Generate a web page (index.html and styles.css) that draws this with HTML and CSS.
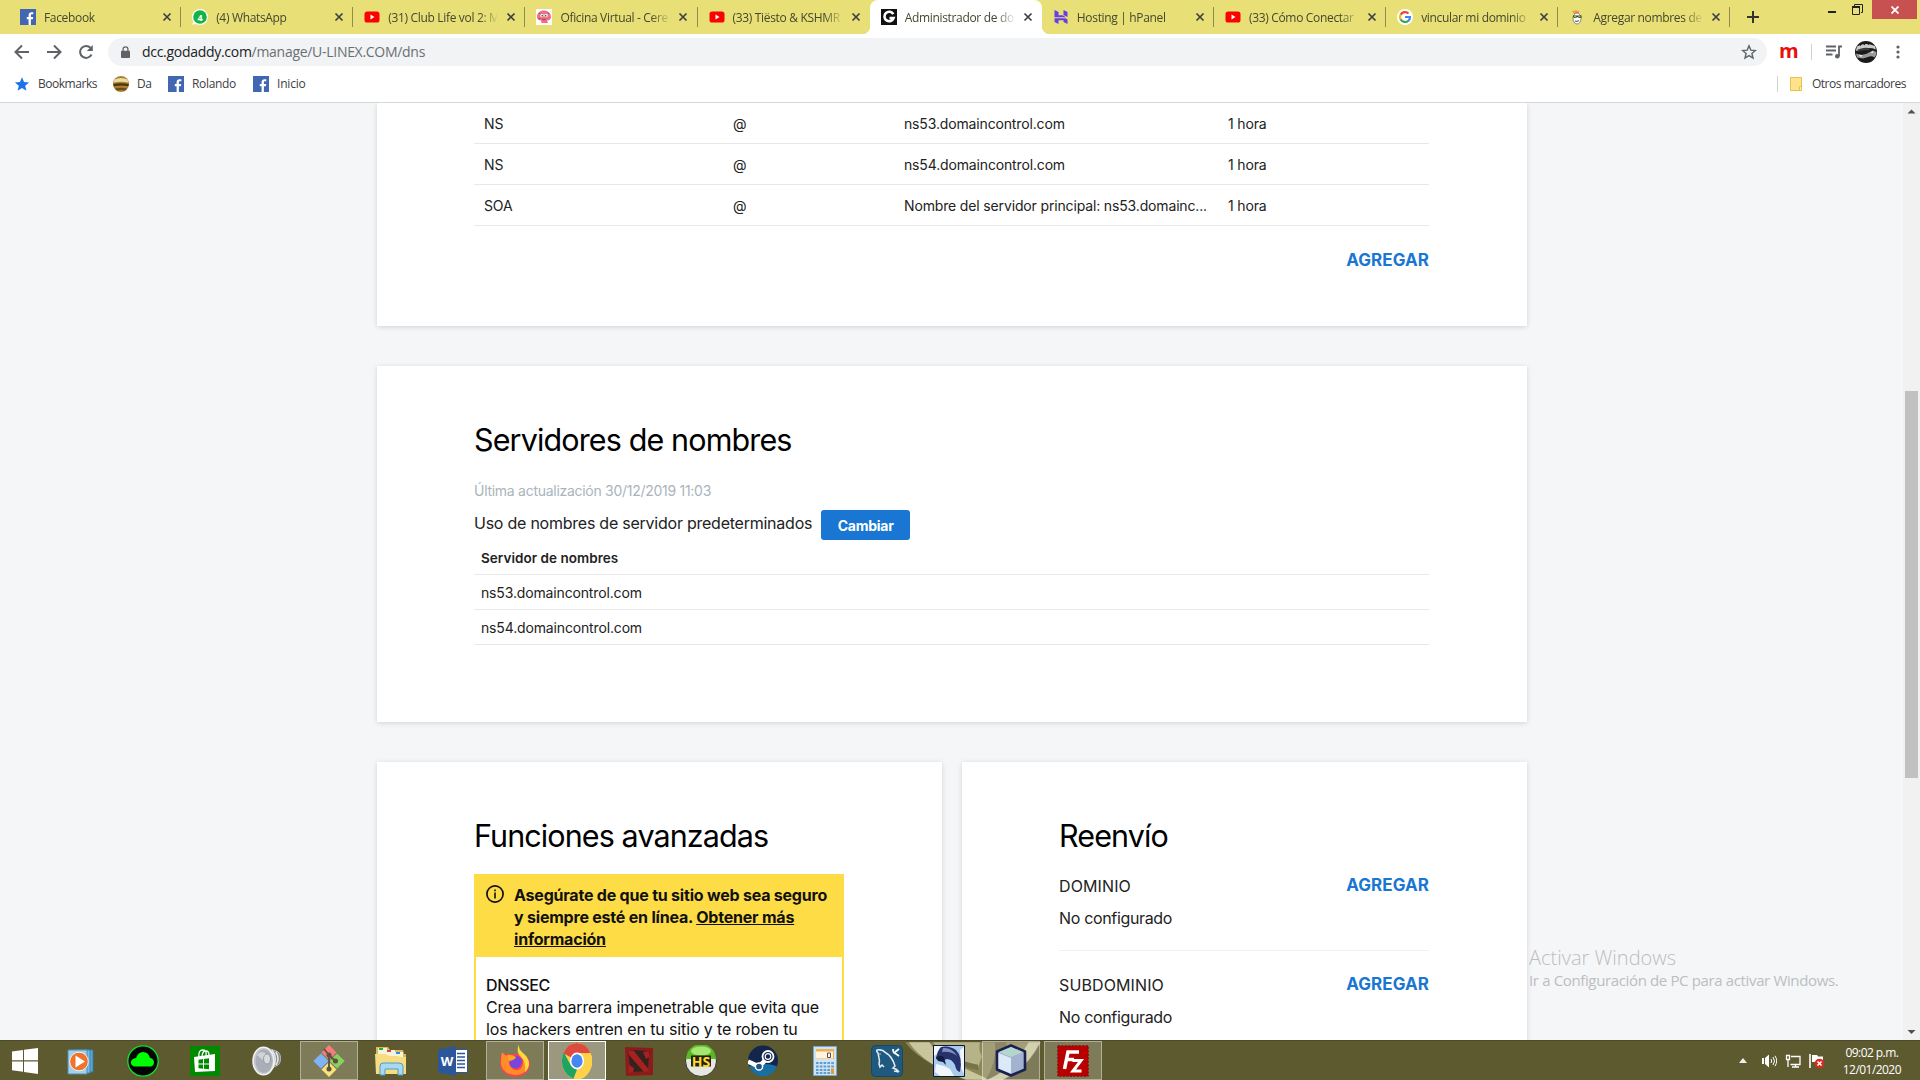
FILE: index.html
```html
<!DOCTYPE html>
<html lang="es">
<head>
<meta charset="utf-8">
<title>Administrador de dominios</title>
<link rel="stylesheet" href="styles.css">
</head>
<body>
<svg class="defs" width="0" height="0" aria-hidden="true">
  <symbol id="fb" viewBox="0 0 16 16"><path fill="#4267b2" d="M0 0h16v16H0z"/><path fill="#fff" d="M8.600 16v-5.800H6.800V8h1.800V6.300C8.600 4.300 9.700 3.200 11.600 3.200c.8 0 1.500.1 1.700.1v2h-1.200c-1 0-1.200.5-1.200 1.100V8h2.300l-.3 2.200h-2V16z"/></symbol>
  <symbol id="yt" viewBox="0 0 16 16"><rect x=".5" y="2.500" width="15" height="11" rx="2.600" fill="#f00"/><path fill="#fff" d="M6.500 5.600v4.800L10.500 8z"/></symbol>
  <symbol id="x" viewBox="0 0 10 10"><path d="M1.500 1.500l7 7M8.500 1.500l-7 7" stroke="#3c4043" stroke-width="1.700" fill="none"/></symbol>
</svg>

<header class="tabs">
  <div class="tab"><svg class="fav"><use href="#fb"/></svg><span class="tt">Facebook</span><svg class="close"><use href="#x"/></svg></div>
  <div class="tab"><svg class="fav" viewBox="0 0 16 16"><circle cx="8" cy="8" r="8" fill="#fff"/><path d="M.3 15.700l1-4 3 3z" fill="#fff"/><circle cx="8" cy="8" r="6.800" fill="#12b446"/><text x="8" y="11.500" class="wa">4</text></svg><span class="tt">(4) WhatsApp</span><svg class="close"><use href="#x"/></svg></div>
  <div class="tab"><svg class="fav"><use href="#yt"/></svg><span class="tt">(31) Club Life vol 2: M</span><svg class="close"><use href="#x"/></svg></div>
  <div class="tab"><svg class="fav" viewBox="0 0 16 16"><path fill="#fff" d="M0 0h16v16H0z"/><path fill="#ee6f80" d="M1 8c0-4 3-6.500 7-6.500s7 3 7 6.500c0 2.500-2 3.500-4 3.500L12 14H5.500L5 11.500C2.500 11.500 1 10.500 1 8z"/><circle cx="6" cy="6.500" r="1.800" fill="#fff"/><circle cx="10" cy="6.500" r="1.800" fill="#fff"/><circle cx="6.300" cy="6.700" r=".9" fill="#367"/><circle cx="9.700" cy="6.700" r=".9" fill="#367"/><path d="M6 10q2 1.500 4 0M3 4l1.500 1M12 3.500l1 1.500M3 9.500h1.500" stroke="#9c3045" fill="none" stroke-width=".8"/></svg><span class="tt">Oficina Virtual - Cere</span><svg class="close"><use href="#x"/></svg></div>
  <div class="tab last"><svg class="fav"><use href="#yt"/></svg><span class="tt">(33) Tiësto &amp; KSHMR</span><svg class="close"><use href="#x"/></svg></div>
  <div class="tab active"><svg class="fav" viewBox="0 0 16 16"><path fill="#111" d="M0 0h16v16H0z"/><path d="M12.300 5.200A4.700 4.700 0 1 0 12.600 9H8.500" fill="none" stroke="#fff" stroke-width="2.600"/></svg><span class="tt">Administrador de do</span><svg class="close"><use href="#x"/></svg></div>
  <div class="tab"><svg class="fav" viewBox="0 0 16 16"><path fill="#673de6" d="M1.500 1l4 2v3.200h4.200l3.300 2H1.500zM10.500 1l4 2v5l-4-2zM1.500 9.300h11l2 1.200V15l-4-2v-1.800h-5V15l-4-2z"/></svg><span class="tt">Hosting | hPanel</span><svg class="close"><use href="#x"/></svg></div>
  <div class="tab"><svg class="fav"><use href="#yt"/></svg><span class="tt">(33) Cómo Conectar</span><svg class="close"><use href="#x"/></svg></div>
  <div class="tab"><svg class="fav" viewBox="0 0 16 16"><circle cx="8" cy="8" r="8" fill="#fff"/><g fill="none" stroke-width="2.200"><path stroke="#ea4335" d="M3.600 5.800A5 5 0 0 1 11.500 4.500"/><path stroke="#fbbc05" d="M3.600 5.600a5 5 0 0 0 0 4.800"/><path stroke="#34a853" d="M3.600 10.200A5 5 0 0 0 11.400 11.700"/><path stroke="#4285f4" d="M8 8h5a5 5 0 0 1-1.700 3.800"/></g></svg><span class="tt">vincular mi dominio</span><svg class="close"><use href="#x"/></svg></div>
  <div class="tab"><svg class="fav" viewBox="0 0 16 16"><path fill="#f29a4a" d="M3 1.500l3 .5 1-1.500 1.500 2L10 1v3.500L5 5z"/><ellipse cx="8" cy="9.500" rx="4" ry="5.500" fill="#fff" stroke="#555" stroke-width=".7"/><path fill="#3b3b2a" d="M4 6.500h8.500v2.300H9.500L8.300 8 7 8.800H4.500z"/><path fill="#7ec242" d="M5 7h2.200v1H5zM9.300 7h2.200v1H9.300z"/><path d="M6 12q2 1 4-.4" stroke="#444" fill="none"/></svg><span class="tt">Agregar nombres de</span><svg class="close"><use href="#x"/></svg></div>
  <svg class="plus" viewBox="0 0 14 14"><path d="M7 1v12M1 7h12" stroke="#33352c" stroke-width="2"/></svg>
  <div class="winbtns">
    <svg class="wmin" viewBox="0 0 8 2"><path d="M0 0h8v2H0z" fill="#222"/></svg>
    <svg class="wmax" viewBox="0 0 11 11"><path d="M2.500 2V.5h8v8H9" fill="none" stroke="#222"/><path d="M.5 3h7v7.500h-7z" fill="none" stroke="#222"/><path d="M0 2h8v2H0z" fill="#222"/></svg>
    <div class="wclose"><svg viewBox="0 0 8 8"><path d="M.5.5l7 7M7.500.5l-7 7" stroke="#fff" stroke-width="1.800"/></svg></div>
  </div>
</header>

<div class="toolbar">
  <svg class="tb back" viewBox="0 0 16 16"><path d="M15 8H2M8 1.500L1.500 8 8 14.500" fill="none" stroke="#5f6368" stroke-width="2"/></svg>
  <svg class="tb fwd" viewBox="0 0 16 16"><path d="M1 8h13M8 1.500L14.500 8 8 14.500" fill="none" stroke="#5f6368" stroke-width="2"/></svg>
  <svg class="tb rel" viewBox="0 0 16 16"><path d="M13.500 10.500A6 6 0 1 1 12.500 3.800" fill="none" stroke="#5f6368" stroke-width="2"/><path d="M14.800 1v6H8.800z" fill="#5f6368"/></svg>
  <div class="omni">
    <svg class="lock" viewBox="0 0 10 14"><path d="M1 5h8a1 1 0 0 1 1 1v6a1 1 0 0 1-1 1H1a1 1 0 0 1-1-1V6a1 1 0 0 1 1-1z" fill="#5f6368"/><path d="M2.300 6V3.500a2.700 2.700 0 0 1 5.400 0V6" fill="none" stroke="#5f6368" stroke-width="1.400"/></svg>
    <span class="url"><b>dcc.godaddy.com</b>/manage/U-LINEX.COM/dns</span>
    <svg class="star" viewBox="0 0 16 16"><path d="M8 1.800l1.800 4.300 4.600.4-3.500 3 1.100 4.600L8 11.600l-4 2.500 1.100-4.600-3.500-3 4.600-.4z" fill="none" stroke="#5f6368" stroke-width="1.400"/></svg>
  </div>
  <span class="ext">m</span>
  <i class="vsep"></i>
  <svg class="playlist" viewBox="0 0 16 14"><path d="M0 1.500h10M0 5.500h10M0 9.500h6.500M13 11V1.500h3" fill="none" stroke="#5f6368" stroke-width="1.800"/><circle cx="11.300" cy="11.200" r="2.300" fill="#5f6368"/></svg>
  <svg class="avatar" viewBox="0 0 22 22"><circle cx="11" cy="11" r="11" fill="#1a1a1a"/><path d="M2 5.500Q10 1 20 5l.8 3.500q-6-2.500-12-.5l-8 2z" fill="#c9c9c9"/><path d="M3 8.500q7-3 12-1l-1 2Q8 8.500 2 11z" fill="#3a3a3a"/><path d="M1 12.500l5 1.500 5-1 7-3.500 3.500 1.500q0 3-2 5.500-3-2-6.500-.5l-5 1.500-6-1z" fill="#9a9a9a"/><path d="M5 4.500l3-3.500M9 4l2-3.500M13 3.700l2-2.700" stroke="#1a1a1a" stroke-width="1.200"/><path d="M3.500 13.500l4 .8-1.500 2zM15 11.500l3-1.500.5 2z" fill="#eee"/></svg>
  <svg class="dots" viewBox="0 0 4 14"><circle cx="2" cy="2" r="1.600"/><circle cx="2" cy="7" r="1.600"/><circle cx="2" cy="12" r="1.600"/></svg>
</div>

<nav class="bookmarks">
  <svg class="bi" viewBox="0 0 16 16"><path fill="#1a73e8" d="M8 1.300l2 4.700 5.100.4-3.900 3.400 1.200 5L8 12.100l-4.400 2.700 1.200-5L.9 6.400 6 6z"/></svg><span class="b1">Bookmarks</span>
  <svg class="bi" viewBox="0 0 16 16"><circle cx="8" cy="8" r="8" fill="#a9812e"/><path d="M1.500 3.500q6.500-3 13 0l.8 3Q8 5 .7 6.500z" fill="#ecd9a4"/><path d="M.2 8q8-1.500 15.600 0l-.5 2.200q-7-1.500-14.500 0z" fill="#4a3512"/><path d="M2 12.500q6-1.500 12 0l-2 2q-4-1-8 0z" fill="#6b4d1a"/></svg><span class="b2">Da</span>
  <svg class="bi"><use href="#fb"/></svg><span class="b3">Rolando</span>
  <svg class="bi"><use href="#fb"/></svg><span class="b4">Inicio</span>
  <div class="others"><i class="vsep"></i><svg class="folder" viewBox="0 0 12 14"><path d="M.5.5h11v13H.5z" fill="#ffe28a" stroke="#e8c04c"/><path d="M9.500 9.500h2v4h-2z" fill="#fff0b8" stroke="#e8c04c"/></svg><span>Otros marcadores</span></div>
</nav>

<main class="view">
  <div class="page">
    <section class="card records">
      <div class="row"><span>NS</span><span>@</span><span>ns53.domaincontrol.com</span><span>1 hora</span></div>
      <div class="row"><span>NS</span><span>@</span><span>ns54.domaincontrol.com</span><span>1 hora</span></div>
      <div class="row"><span>SOA</span><span>@</span><span>Nombre del servidor principal: ns53.domainc...</span><span>1 hora</span></div>
      <a class="add">AGREGAR</a>
    </section>

    <section class="card ns">
      <h2>Servidores de nombres</h2>
      <p class="upd">Última actualización 30/12/2019 11:03</p>
      <div class="use"><span>Uso de nombres de servidor predeterminados</span><button>Cambiar</button></div>
      <div class="nrow nh">Servidor de nombres</div>
      <div class="nrow">ns53.domaincontrol.com</div>
      <div class="nrow">ns54.domaincontrol.com</div>
    </section>

    <div class="pair">
      <section class="card half">
        <h2>Funciones avanzadas</h2>
        <div class="promo">
          <div class="phead">
            <svg viewBox="0 0 18 18"><circle cx="9" cy="9" r="8.100" fill="none" stroke="#111" stroke-width="1.700"/><path d="M8.200 7.500h1.600v6H8.200zM8.200 4.500h1.600v1.700H8.200z" fill="#111"/></svg>
            <p>Asegúrate de que tu sitio web sea seguro<br>y siempre esté en línea. <u>Obtener más</u><br><u>información</u></p>
          </div>
          <div class="pbody"><strong>DNSSEC</strong><br>Crea una barrera impenetrable que evita que<br>los hackers entren en tu sitio y te roben tu</div>
        </div>
      </section>
      <section class="card half fwdcard">
        <h2>Reenvío</h2>
        <div class="fw"><span class="ft">DOMINIO</span><a class="add">AGREGAR</a></div>
        <p class="nc">No configurado</p>
        <hr>
        <div class="fw"><span class="ft">SUBDOMINIO</span><a class="add">AGREGAR</a></div>
        <p class="nc">No configurado</p>
      </section>
    </div>
  </div>
  <div class="scroll"><svg viewBox="0 0 17 17"><path d="M8.500 6.500l4 4h-8z" fill="#505050"/></svg><div class="thumb"></div><svg viewBox="0 0 17 17"><path d="M8.500 11l4-4h-8z" fill="#505050"/></svg></div>
  <div class="watermark"><div class="w1">Activar Windows</div><div class="w2">Ir a Configuración de PC para activar Windows.</div></div>
</main>

<footer class="taskbar">
  <svg class="swirl" viewBox="0 0 160 40"><path d="M0 0h145q-14 28-40 40H75Q22 28 0 0z" fill="#8b8757"/><path d="M4 0h22q10 16 34 26l30 14H65Q20 24 4 0z" fill="#c9c59c"/><path d="M30 0h50q-2 8 2 15l-4 12Q42 20 30 0z" fill="#b7b388"/><path d="M36 4q12 14 42 20v6Q44 22 34 6z" fill="#77744a"/><path d="M96 0h12q2 20-8 40H86q12-18 10-40z" fill="#6d6a3e"/><path d="M132 0h12q-14 28-40 40H88q30-14 44-40z" fill="#c9c59c"/></svg>
  <div class="app start"><svg width="26" height="26" viewBox="0 0 26 26"><path fill="#fff" d="M0 3.500l11-1.600v10.400H0zM12 1.800L26 0v12.300H12zM0 13.500h11v10.300L0 22.200zM12 13.500h14V26l-14-1.900z"/></svg></div>
  <div class="app"><svg width="28" height="28" viewBox="0 0 28 28"><path fill="#5fa6cf" stroke="#2f7ba8" d="M7 3h19v22H7z"/><path fill="#7dbbe0" stroke="#3a84b2" d="M4 3h19v23H4z"/><path fill="#a5d0ea" stroke="#4a8ebb" d="M1 3h19v24H1z"/><circle cx="12" cy="14.500" r="9.300" fill="#f0732a" stroke="#fff" stroke-width=".8"/><path fill="#fff" d="M8.500 8.500v12l9.500-6z"/></svg></div>
  <div class="app"><svg width="32" height="32" viewBox="0 0 32 32"><circle cx="16" cy="16" r="15.200" fill="#030303" stroke="#0be62b" stroke-width="1.300"/><path fill="#0f0" d="M7 21.500a4 4 0 0 1-1-7.500q2-1 3-1 2-6 7-6 5.500 0 7 6 3 0 4 4 0 3.500-3 4.500z"/></svg></div>
  <div class="app"><svg width="30" height="30" viewBox="0 0 30 30"><path fill="#008a00" d="M0 0h30v30H0z"/><path fill="#fff" d="M4 11l21-3v17L5 26z"/><path d="M9 11q-1-7 4-7 4 0 3 6M12 10q1-6 4-5 3 0 3 4" fill="none" stroke="#fff" stroke-width="1.300"/><path fill="#008a00" d="M8.500 13.700l4.500-.6v4.400H8.500zM14 13l5-.7v5.200h-5zM8.500 18.500H13v4.200l-4.500-.4zM14 18.500h5v4.800l-5-.5z"/></svg></div>
  <div class="app"><svg width="30" height="30" viewBox="0 0 30 30"><path d="M13 1.500l8 2.500 3 1q4.500 1 4.500 7.500T24 20l-2 1-8 8z" fill="#85888c" stroke="#b5b8bb"/><path d="M20 4q7 9 0 19M24 6q4 7 0 13" fill="none" stroke="#e2e4e6" stroke-width="1.600"/><ellipse cx="11.500" cy="15" rx="10.500" ry="13.800" fill="#c3c7cd" stroke="#f1f1f1" stroke-width="1.500"/><ellipse cx="12" cy="15" rx="8.500" ry="11.500" fill="#a9afb9"/><path d="M5 9q5-6 10 0L12 15z" fill="#cfd3da"/><ellipse cx="15" cy="13" rx="3.500" ry="5" fill="#d8dadd" stroke="#8b8f95" stroke-width=".8"/></svg></div>
  <div class="app on"><svg width="32" height="32" viewBox="0 0 32 32"><path fill="#f87c7c" d="M16 0l7.500 7.500-7.500 7.500-7.500-7.500z"/><path fill="#7fb3f7" d="M8 8.500l7.500 7.500L8 23.500.3 16z"/><path fill="#8bcf5f" d="M24 8.500l7.700 7.500-7.700 7.500-7.500-7.500z"/><path fill="#fbe07b" d="M16 17l7.500 7.500L16 32l-7.500-7.500z"/><path d="M11 4l5 6v13M16 10l6 6" stroke="#5a5240" stroke-width="1.800" fill="none"/><circle cx="16" cy="10" r="2.500" fill="#5a5240"/><circle cx="22.500" cy="16" r="2.500" fill="#5a5240"/><circle cx="16" cy="24" r="2.500" fill="#5a5240"/></svg></div>
  <div class="app"><svg width="32" height="30" viewBox="0 0 32 30"><path fill="#d9b95c" d="M1 1h12l2 3h13l1 4h2v20H1z"/><path fill="#f6f2dd" d="M3 2h9v7H3zM10 4h10v7H10zM19 6h9v7H19z"/><path fill="#19b52b" d="M4 2h4v2H4z"/><path fill="#d8442f" d="M12 4h4v2h-4z"/><path fill="#2a8ee0" d="M21 6h4v2h-4z"/><path fill="#f6dd83" d="M0 8h11l3 2h9l3 1h5v17H1z"/><path fill="#a9d9f2" stroke="#4a9ec9" d="M5 29v-9q0-3 3-3h16q4 0 4 3v9h-5v-6H10v6z"/></svg></div>
  <div class="app"><svg width="30" height="30" viewBox="0 0 30 30"><path fill="#fff" stroke="#2b579a" d="M16 3.500h13.500v23H16z"/><path d="M19 7.500h8M19 11h8M19 14.500h8M19 18h8M19 21.500h8" stroke="#2b579a" stroke-width="1.500"/><path fill="#2b579a" d="M0 3.500L18 0v30L0 26.500z"/><text x="9" y="20" class="wd">W</text></svg></div>
  <div class="app on"><svg width="32" height="34" viewBox="0 0 32 34"><path fill="#ff4055" d="M3 8l3 3q3-2 5-1l10 0 8 4q2 4 2 6-1 12-15 13Q2 31 1 20q0-7 2-12z"/><path fill="#ff9a1f" d="M3 8q3 4 6 4l4 3-3 5q3 7 9 6 6-2 5-11l-3-6 6 3q4 5 3 10-4 9-14 9-12-1-14-11 0-8 1-12z" opacity=".85"/><circle cx="16.500" cy="18" r="6.300" fill="#7a45dd"/><path fill="#ffd83a" d="M20 0q-1 5 4 9 6 5 6 11-1 6-4 8 1-9-3-14-7-5-3-14z"/><path fill="#ffa41c" d="M8 11q4-1 9 2-1 3-7 4z"/></svg></div>
  <div class="app on focus"><svg width="30" height="36" viewBox="0 0 30 30" preserveAspectRatio="none"><circle cx="15" cy="15" r="15" fill="#fdd24b"/><path fill="#dd4b3e" d="M15 15L1.500 8.500A15 15 0 0 1 28.500 8.500H15z"/><path fill="#1da462" d="M1.800 7.800L9 19l6 3-3.500 7.600A15 15 0 0 1 1.800 7.800z"/><path fill="#fdd24b" d="M21 19l-8 11A15 15 0 0 0 28.600 8.500H17z"/><circle cx="15" cy="15" r="7" fill="#fff"/><circle cx="15" cy="15" r="5.600" fill="#4587f3"/></svg></div>
  <div class="app"><svg width="30" height="30" viewBox="0 0 30 30"><path fill="#8e1b1b" d="M1 1l28 1v27l-27 1z"/><path fill="#32231c" d="M4 4l22 1-1 3-1 14 2 3-21 1 1-6L5 12z"/><path fill="#a82121" d="M4 4l6 1 16 20-6 1L5 9zM19 6l6-1v6l-3 2zM5 19l5 3-1 4-5 1z"/></svg></div>
  <div class="app"><svg width="32" height="32" viewBox="0 0 32 32"><circle cx="16" cy="16" r="15.500" fill="#e7e7e2" stroke="#333"/><path fill="#5ab822" d="M1 14A15 15 0 0 1 31 14z"/><ellipse cx="16" cy="6" rx="10" ry="4.500" fill="#a5e673"/><path d="M6 10.500h20v11H6z" fill="#22230f"/><text x="16" y="21.500" class="hs">HS</text></svg></div>
  <div class="app"><svg width="30" height="31" viewBox="0 0 30 30"><circle cx="15" cy="15" r="15" fill="#12254a"/><path d="M1 21a15 15 0 0 0 28 0q-9-5-28 0z" fill="#176fa5"/><path d="M0 16l11 5 9-9" stroke="#fff" stroke-width="4.500" fill="none"/><circle cx="20" cy="11" r="5.500" fill="#12254a" stroke="#fff" stroke-width="1.800"/><circle cx="20" cy="11" r="2.800" fill="#12254a" stroke="#fff" stroke-width="1.200"/><circle cx="11" cy="21" r="3.600" fill="#245382" stroke="#fff" stroke-width="1.500"/></svg></div>
  <div class="app"><svg width="24" height="30" viewBox="0 0 24 30"><path fill="#cfe4f2" stroke="#78a9cc" d="M.5.500h23v29H.5z"/><path fill="#f3ad55" d="M3 3h18v10H3z"/><path fill="#fff3dd" d="M3 5.500h17v7H3z"/><path d="M14.500 7h3v4.500h-3z" fill="none" stroke="#555"/><path d="M3 17h18M3 20.500h18M3 24h18M3 27h18" stroke="#5d9bd0" stroke-width="2.200" stroke-dasharray="2.600 1.200"/><path fill="#ef9a2c" d="M18 22.500h3V28h-3z"/></svg></div>
  <div class="app"><svg width="32" height="32" viewBox="0 0 32 32"><rect x=".5" y=".5" width="31" height="31" rx="4" fill="#1f5980" stroke="#174766"/><path d="M28 27q-2-3-6-4l2-2q-3-10-9-13-4-4-9-3-1 1 1 3l1 5q1 3 0 6l1 3 2-2 2 2M8.500 9h1M28 27l-5-1" fill="none" stroke="#e6edf2" stroke-width="1.500"/><path d="M22 4q0 4 2.500 4.500L28 11M24 7l4-3" fill="none" stroke="#fff" stroke-width="1.800"/></svg></div>
  <div class="app"><svg width="32" height="32" viewBox="0 0 32 32"><path fill="#a9cbee" stroke="#0d1638" d="M.5.500h31v31H.5z"/><path fill="#f1f7fd" d="M1 1h9L6 8l-5 3zM3 19l8 2 6 3 4 7H7l-5-4zM27 5l4-3v27l-3-6z"/><path fill="#27316b" d="M8 2q8-2 15 3 7 7 4 22-4-1-5-7-3-6-8-6l-6 2-5-2Q4 6 8 2z"/><path fill="#8190c8" d="M10 3q9-1 14 8-6-5-15-4z"/><path fill="#141b42" d="M3 12q5-2 8 0l2 8-3-3-5-1z"/></svg></div>
  <div class="app on"><svg width="32" height="33" viewBox="0 0 32 33"><path fill="#a3b2cf" stroke="#1b2050" stroke-width="2.600" stroke-linejoin="round" d="M16 1.500L30 7.500v18L16 31.500 2 25.500v-18z"/><path fill="#b5d6cb" d="M16 3l12 5-12 5L4 8z"/><path fill="#dce9f6" d="M3.500 9L16 14v15.500L3.500 24.500z"/></svg></div>
  <div class="app on"><svg width="32" height="32" viewBox="0 0 32 32"><path fill="#b80000" stroke="#8a0000" stroke-dasharray="2 1.500" d="M.8.800h30.400v30.400H.8z"/><path d="M7.500 24L11 7h11M9 14.500h8" fill="none" stroke="#fff" stroke-width="3.600"/><path d="M15.500 15.500h8.500l-8 10.500h8.500" fill="none" stroke="#fff" stroke-width="3"/></svg></div>
  <div class="tray">
    <svg class="t1" viewBox="0 0 8 5"><path d="M4 0l4 5H0z" fill="#eee"/></svg>
    <svg class="t2" viewBox="0 0 16 14"><path d="M1 4h2v6H1zM4 4l4-3.500v13L4 10z" fill="#fff"/><path d="M10 5q1.500 2 0 4M12 3q3 4 0 8M14 1.800q3.400 5 0 10.400" stroke="#fff" fill="none"/></svg>
    <svg class="t3" viewBox="0 0 16 14"><path d="M1.500 1.500h3v4h-3zM3 5.500V13M6 2.500h9v8H5.500M10.500 10.500V13M7 13h7" fill="none" stroke="#fff" stroke-width="1.300"/></svg>
    <svg class="t4" viewBox="0 0 16 16"><path d="M1 1v14" stroke="#fff" stroke-width="1.600"/><path d="M3 2h5l1 1.500h5V9H3z" fill="#fff"/><circle cx="10.500" cy="10.500" r="4.800" fill="#d92b22"/><path d="M8.500 8.500l4 4M12.500 8.500l-4 4" stroke="#fff" stroke-width="1.600"/></svg>
    <div class="clock">09:02 p.m.<br>12/01/2020</div>
  </div>
</footer>
</body>
</html>
```
FILE: styles.css
```css
* { box-sizing: border-box; }
html, body { margin: 0; height: 1080px; overflow: hidden; }
body { display: flex; flex-direction: column; width: 1920px; font-family: "Inter", sans-serif; background: #fff; color: #222; }
svg { display: block; flex: none; }
.defs { position: absolute; }
p, h2 { margin: 0; }

/* tab strip */
.tabs { display: flex; height: 34px; background: #e8e077; padding-left: 9px; font: 12px "Open Sans", sans-serif; letter-spacing: -.33px; color: #45472f; flex: none; }
.tab { position: relative; display: flex; align-items: center; width: 172.150px; flex: none; padding: 0 0 0 11px; }
.tab::after { content: ""; position: absolute; right: 0; top: 7px; width: 1px; height: 20px; background: #8f8b53; }
.tab.last::after, .tab.active::after { display: none; }
.fav { width: 16px; height: 16px; }
.tt { width: 109px; margin-left: 8px; overflow: hidden; white-space: nowrap; -webkit-mask-image: linear-gradient(90deg, #000 91px, transparent 111px); mask-image: linear-gradient(90deg, #000 91px, transparent 111px); }
.close { width: 10px; height: 10px; margin-left: 9px; }
.tab.active { background: #fff; border-radius: 8px 8px 0 0; }
.tab.active::before { content: ""; position: absolute; left: -8px; right: -8px; bottom: 0; height: 8px; background: radial-gradient(circle at 0 0, transparent 8px, #fff 8.500px) left / 8px 8px no-repeat, radial-gradient(circle at 100% 0, transparent 8px, #fff 8.500px) right / 8px 8px no-repeat; }
.wa { font: bold 9px "Open Sans", sans-serif; fill: #fff; text-anchor: middle; }
.plus { width: 14px; height: 14px; margin: 10px 0 0 16px; }
.winbtns { display: flex; margin-left: auto; padding-right: 3px; align-items: flex-start; }
.wmin { width: 8px; height: 2px; margin: 11px 16px 0 0; }
.wmax { width: 11px; height: 11px; margin: 4px 9px 0 0; }
.wclose { width: 45px; height: 19px; background: #c75050; display: grid; place-items: center; }
.wclose svg { width: 8px; height: 8px; }

/* toolbar */
.toolbar { display: flex; align-items: center; height: 36px; flex: none; }
.tb { width: 16px; height: 16px; }
.back { margin-left: 14px; }
.fwd { margin-left: 16px; }
.rel { margin-left: 16px; }
.omni { display: flex; align-items: center; width: 1659px; height: 28px; margin-left: 14px; border-radius: 14px; background: #f1f3f4; padding: 0 10px 0 13px; }
.lock { width: 9px; height: 13px; }
.url { font: 14px "Open Sans", sans-serif; letter-spacing: -.29px; color: #6b6f73; margin-left: 12px; padding-bottom: 1px; }
.url b { font-weight: 400; color: #202124; }
.star { width: 16px; height: 16px; margin-left: auto; }
.ext { width: 18px; margin-left: 12px; padding-bottom: 2px; font: bold 20px/20px "Open Sans", sans-serif; color: #e6100c; }
.vsep { width: 1px; height: 16px; background: #cdd0d4; }
.toolbar .vsep { margin-left: 14px; }
.playlist { width: 16px; height: 14px; margin-left: 14px; }
.avatar { width: 22px; height: 22px; margin-left: 13px; }
.dots { width: 4px; height: 14px; margin-left: 19px; fill: #5f6368; }

/* bookmarks */
.bookmarks { display: flex; align-items: center; height: 33px; flex: none; border-bottom: 1px solid #d5d8db; padding: 0 14px 4px 14px; font: 12px "Open Sans", sans-serif; letter-spacing: -.47px; color: #3c4043; }
.bookmarks span { padding-bottom: 1px; }
.bi { width: 16px; height: 16px; margin-right: 8px; }
.b1 { width: 75px; } .b2 { width: 31px; } .b3 { width: 61px; letter-spacing: -.32px; } .b4 { letter-spacing: -.2px; }
.others { display: flex; align-items: center; margin-left: auto; }
.folder { width: 12px; height: 14px; margin: 0 10px 0 12px; }

/* page */
.view { position: relative; display: flex; height: 937px; flex: none; overflow: hidden; background: #f5f6f8; }
.page { width: 1903px; padding-left: 377px; }
.card { width: 1150px; background: #fff; box-shadow: 0 1px 5px rgba(0,0,0,.15); padding: 0 98px 0 97px; overflow: hidden; }
.records { height: 223px; }
.row { display: grid; grid-template-columns: 249px 171px 324px 1fr; height: 41px; padding: 1px 0 0 10px; align-items: center; border-bottom: 1px solid #e8e8e8; font-size: 14px; letter-spacing: -.15px; }
.add { display: block; color: #1976d2; font-weight: 700; font-size: 17px; line-height: 20px; letter-spacing: .08px; }
.records .add { margin: 24px 0 0; text-align: right; }
.ns { height: 356px; margin-top: 40px; }
h2 { font-weight: 400; font-size: 30.500px; line-height: 40px; letter-spacing: -.9px; color: #000; }
.ns h2 { padding-top: 54px; letter-spacing: -.87px; }
.upd { font-size: 14px; line-height: 20px; letter-spacing: -.28px; color: #a9b4bc; margin-top: 21px; }
.use { display: flex; align-items: flex-start; height: 30px; margin-top: 9px; font-size: 16px; line-height: 27px; letter-spacing: -.24px; }
.use button { width: 89px; height: 30px; border: 0; border-radius: 3px; background: #1976d2; color: #fff; font: 700 14px "Inter", sans-serif; letter-spacing: -.24px; margin-left: 9px; padding: 0; }
.nrow { height: 35px; line-height: 36px; border-bottom: 1px solid #e8e8e8; padding-left: 7px; font-size: 14px; letter-spacing: -.15px; }
.nh { font-weight: 600; font-size: 13.500px; letter-spacing: .04px; }
.pair { display: flex; gap: 20px; margin-top: 40px; }
.half { width: 565px; height: 300px; }
.half h2 { padding-top: 54px; }
.promo { width: 370px; border: 2px solid #fedc45; margin-top: 18px; }
.phead { display: flex; background: #fedc45; height: 81px; padding: 9px 0 0 10px; font-weight: 700; font-size: 16px; line-height: 22px; letter-spacing: -.21px; color: #111; white-space: nowrap; }
.phead svg { width: 18px; height: 18px; margin-right: 10px; }
.phead p { margin-top: -1px; }
.pbody { padding: 17px 0 0 10px; font-size: 16px; line-height: 22px; letter-spacing: -.13px; color: #111; white-space: nowrap; height: 200px; }
.pbody strong { font-weight: 500; letter-spacing: -.28px; }
.fw { display: flex; justify-content: space-between; line-height: 20px; font-size: 16px; }
.ft { padding-top: 1px; letter-spacing: .12px; }
.fwdcard h2 { margin-bottom: 19px; }
.nc { font-size: 16px; line-height: 20px; letter-spacing: -.34px; margin-top: 12px; }
hr { border: 0; height: 1px; background: #f1f1f1; margin: 22px 0 23px; }
.scroll { display: flex; flex-direction: column; align-items: center; width: 17px; background: #f1f1f1; }
.scroll svg { width: 17px; height: 17px; }
.thumb { width: 13px; height: 387px; background: #c1c1c1; margin: 271px 0 auto; }
.watermark { position: absolute; left: 1529px; top: 840px; color: #bcbec0; font-family: "Open Sans", sans-serif; white-space: nowrap; }
.w1 { font-size: 20px; line-height: 30px; font-weight: 300; }
.w2 { font-size: 15px; line-height: 14px; letter-spacing: -.36px; }

/* taskbar */
.taskbar { position: relative; display: flex; height: 40px; flex: none; background: #5d5a2f; border-top: 1px solid #4c4a28; }
.swirl { position: absolute; left: 905px; top: 0; width: 150px; height: 40px; }
.app { position: relative; display: grid; place-items: center; width: 58px; height: 39px; margin-right: 4px; flex: none; }
.app svg { max-height: 36px; }
.start { width: 50px; margin-right: 2px; }
.on { background: rgba(255,255,255,.2); border: 1px solid rgba(255,255,255,.4); }
.focus { background: rgba(255,255,255,.38); border-color: #fff; }
.wd { font: bold 13px "Open Sans", sans-serif; fill: #fff; text-anchor: middle; }
.hs { font: bold 14px "Open Sans", sans-serif; fill: #ffd92e; text-anchor: middle; }
.tray { display: flex; align-items: center; margin-left: auto; padding-right: 19px; color: #fff; font: 12px/17px "Open Sans", sans-serif; letter-spacing: -.55px; }
.t1 { width: 8px; height: 5px; } .t2 { width: 16px; height: 14px; margin-left: 14px; } .t3 { width: 16px; height: 14px; margin-left: 8px; } .t4 { width: 16px; height: 16px; margin-left: 8px; }
.clock { text-align: center; margin-left: 18px; }
```
